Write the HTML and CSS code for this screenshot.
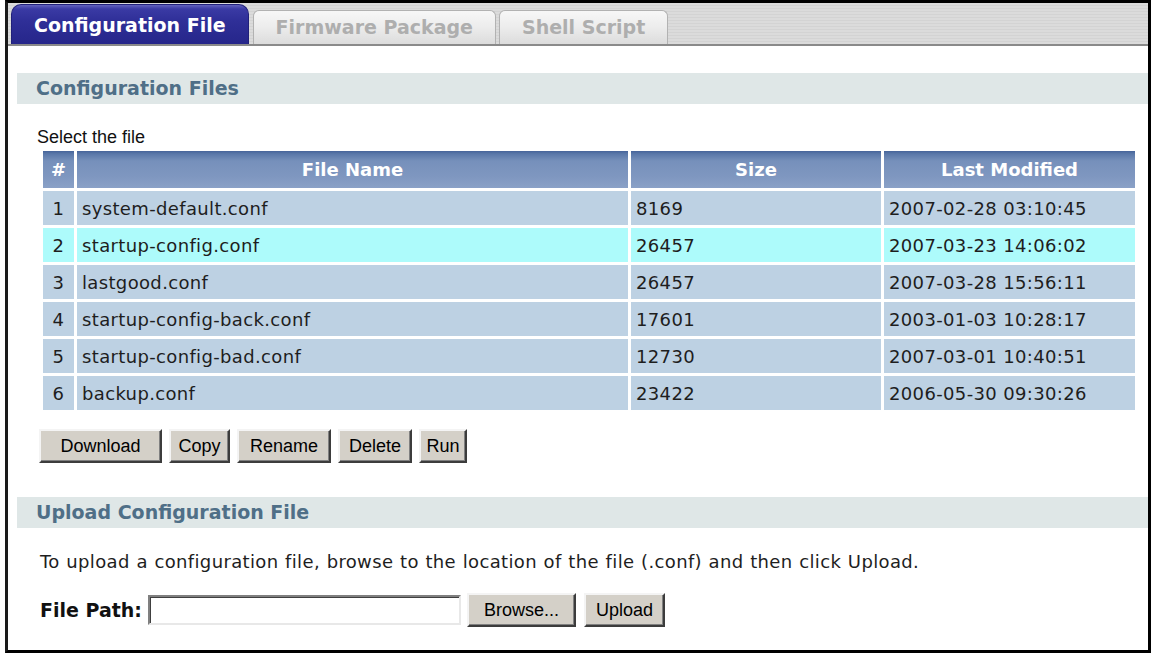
FILE: index.html
```html
<!DOCTYPE html>
<html>
<head>
<meta charset="utf-8">
<title>Configuration File</title>
<link rel="stylesheet" href="styles.css">
</head>
<body>
<div class="frame">
  <div class="tabbar">
    <div class="tab active">Configuration File</div>
    <div class="tab tab-fw">Firmware Package</div>
    <div class="tab">Shell Script</div>
  </div>
  <div class="content">
    <div class="section-title">Configuration Files</div>
    <div class="hint">Select the file</div>
    <table class="files">
      <thead>
        <tr>
          <th class="c-num">#</th>
          <th class="c-name">File Name</th>
          <th class="c-size">Size</th>
          <th class="c-mod">Last Modified</th>
        </tr>
      </thead>
      <tbody>
        <tr><td class="num">1</td><td>system-default.conf</td><td>8169</td><td>2007-02-28 03:10:45</td></tr>
        <tr class="selected"><td class="num">2</td><td>startup-config.conf</td><td>26457</td><td>2007-03-23 14:06:02</td></tr>
        <tr><td class="num">3</td><td>lastgood.conf</td><td>26457</td><td>2007-03-28 15:56:11</td></tr>
        <tr><td class="num">4</td><td>startup-config-back.conf</td><td>17601</td><td>2003-01-03 10:28:17</td></tr>
        <tr><td class="num">5</td><td>startup-config-bad.conf</td><td>12730</td><td>2007-03-01 10:40:51</td></tr>
        <tr><td class="num">6</td><td>backup.conf</td><td>23422</td><td>2006-05-30 09:30:26</td></tr>
      </tbody>
    </table>
    <div class="actions">
      <button class="btn w-download">Download</button>
      <button class="btn w-copy">Copy</button>
      <button class="btn w-rename">Rename</button>
      <button class="btn w-delete">Delete</button>
      <button class="btn w-run">Run</button>
    </div>
    <div class="section-title second">Upload Configuration File</div>
    <p class="desc">To upload a configuration file, browse to the location of the file (.conf) and then click Upload.</p>
    <div class="filepath">
      <label class="fp-label">File Path:</label>
      <input class="fp-input" type="text">
      <button class="btn w-browse">Browse...</button>
      <button class="btn w-upload">Upload</button>
    </div>
  </div>
</div>
</body>
</html>
```
FILE: styles.css
```css
html, body {
  margin: 0;
  padding: 0;
  background: #ffffff;
}
body {
  width: 1151px;
  height: 656px;
  overflow: hidden;
  font-family: "DejaVu Sans", Verdana, sans-serif;
  color: #1e1e1e;
}
.frame {
  margin-left: 5px;
  width: 1140px;
  height: 647px;
  border: 3px solid #000;
  border-left-color: #1a1a1a;
  background: #fff;
}
.tabbar {
  height: 41px;
  border-bottom: 2px solid #8a8a8a;
  background: repeating-linear-gradient(to bottom, #dbdbdb 0, #dbdbdb 2px, #d3d3d3 2px, #d3d3d3 3px);
  display: flex;
  align-items: flex-end;
  padding-left: 3px;
  gap: 3px;
}
.tab {
  box-sizing: border-box;
  height: 34px;
  line-height: 32px;
  padding: 0 22px;
  font-size: 19px;
  font-weight: bold;
  color: #aeaeae;
  background: linear-gradient(to bottom, #f7f7f7 0, #ececec 50%, #dcdcdc 100%);
  border: 1px solid #b2b2b2;
  border-bottom: none;
  border-radius: 6px 6px 0 0;
  white-space: nowrap;
}
.tab.active {
  height: 40px;
  line-height: 40px;
  color: #ffffff;
  background: linear-gradient(to bottom, #6262bd 0, #3a3aa4 4px, #2f2f98 40%, #26268a 100%);
  border-color: #20207a;
  border-radius: 10px 10px 0 0;
}
.tab-fw {
  margin-left: 1px;
}
.content {
  padding-left: 9px;
}
.section-title {
  margin-top: 27px;
  height: 31px;
  line-height: 31px;
  background: #dfe7e7;
  color: #4f6f87;
  font-size: 19px;
  font-weight: bold;
  padding-left: 19px;
}
.section-title.second {
  margin-top: 34px;
}
.hint {
  font-family: "Liberation Sans", Arial, sans-serif;
  font-size: 18px;
  line-height: 20px;
  margin: 23px 0 0 20px;
  color: #111;
}
.files {
  border-collapse: separate;
  border-spacing: 3px;
  margin: 1px 0 0 23px;
  font-size: 18px;
}
.files th {
  height: 37px;
  padding: 0;
  color: #ffffff;
  font-weight: bold;
  font-size: 18px;
  text-align: center;
  background: linear-gradient(to bottom, #46649a 0, #5a78a9 3px, #7690bb 10px, #7f97c0 70%, #8aa1c7 100%);
}
.c-num { width: 31px; }
.c-name { width: 551px; }
.c-size { width: 250px; }
.c-mod { width: 251px; }
.files td {
  height: 34px;
  padding: 0 0 0 5px;
  background: #bdd1e3;
  color: #1e1e1e;
  white-space: nowrap;
  letter-spacing: 0.35px;
}
.files td.num {
  padding: 0;
  text-align: center;
}
.files tr.selected td {
  background: #adfbfb;
}
.actions {
  display: flex;
  gap: 7px;
  margin: 16px 0 0 22px;
}
.btn {
  box-sizing: border-box;
  height: 34px;
  padding: 0;
  font-family: "Liberation Sans", Arial, sans-serif;
  font-size: 18px;
  color: #000;
  background: #d4d0c8;
  border: 2px solid;
  border-color: #f4f4f4 #3c3c3c #3c3c3c #f4f4f4;
  box-shadow: inset -1px -1px 0 #808080;
}
.w-download { width: 123px; }
.w-copy { width: 61px; }
.w-rename { width: 94px; }
.w-delete { width: 74px; }
.w-run { width: 48px; }
.w-browse { width: 109px; margin-right: 8px; }
.w-upload { width: 81px; }
.desc {
  margin: 23px 0 0 23px;
  font-size: 18px;
  line-height: 22px;
  color: #1e1e1e;
  letter-spacing: 0.35px;
  word-spacing: 0.6px;
}
.filepath {
  display: flex;
  align-items: center;
  height: 34px;
  margin: 20px 0 0 23px;
}
.fp-label {
  font-size: 19px;
  font-weight: bold;
  color: #111;
  margin-right: 6px;
}
.fp-input {
  box-sizing: border-box;
  width: 313px;
  height: 30px;
  margin: 0 6px 0 0;
  padding: 0;
  background: #fff;
  border: 2px solid;
  border-color: #808080 #e8e8e8 #e8e8e8 #808080;
  box-shadow: inset 1px 1px 0 #404040;
}
```
